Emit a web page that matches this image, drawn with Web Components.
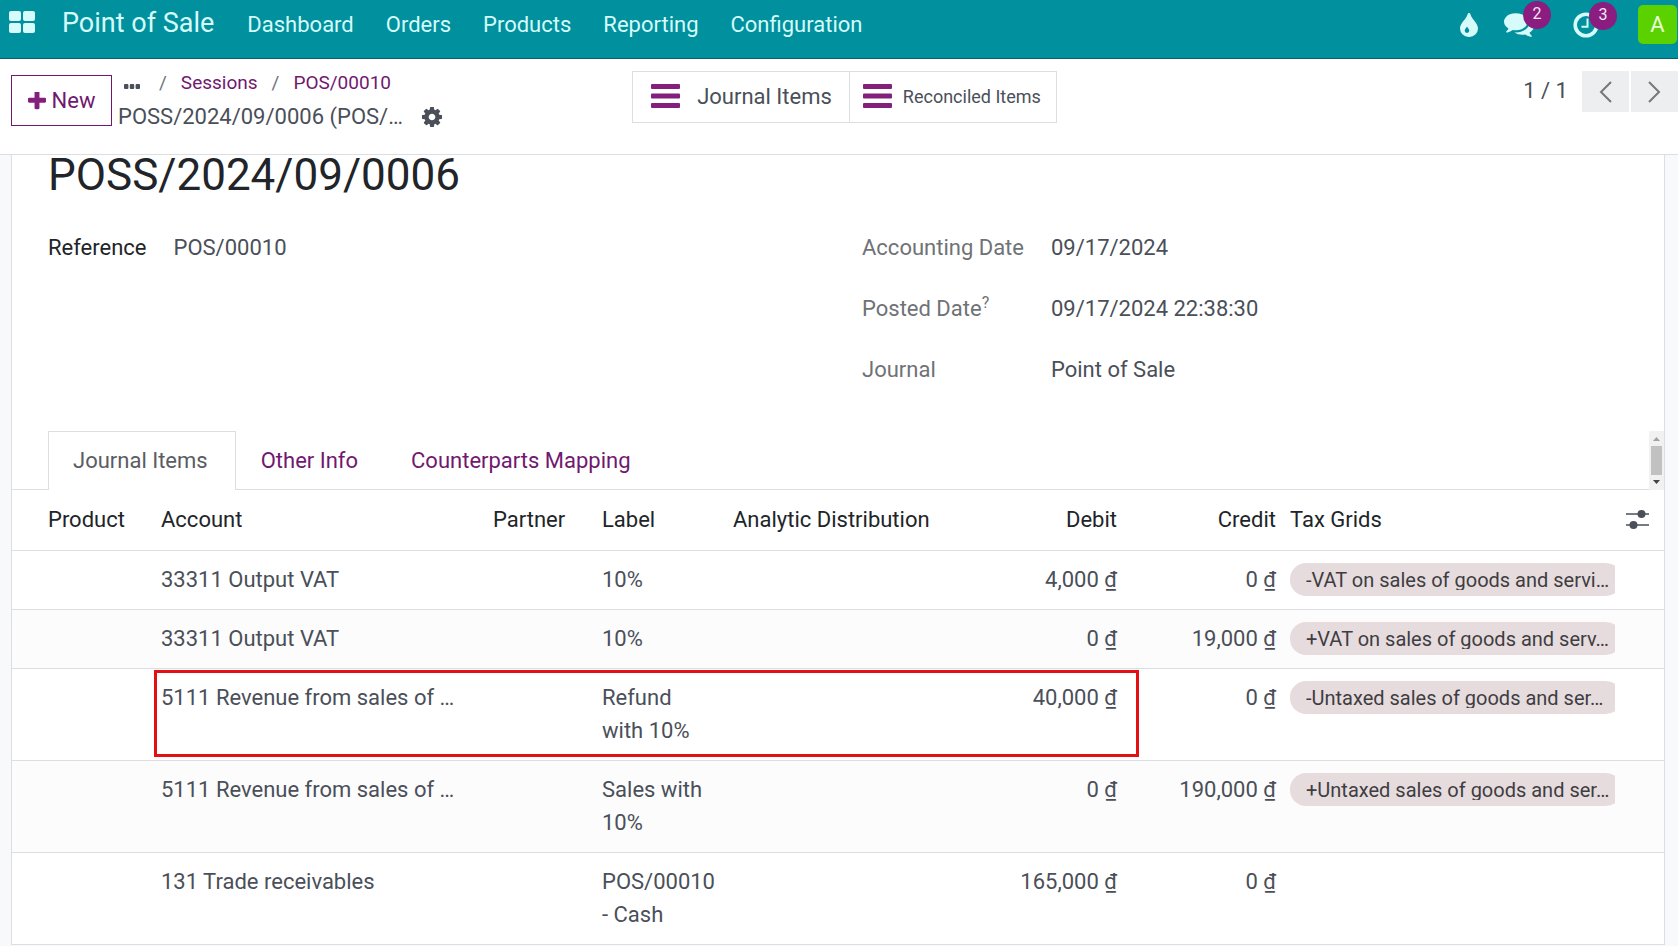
<!DOCTYPE html>
<html lang="en">
<head>
<meta charset="utf-8">
<title>Point of Sale - POSS/2024/09/0006</title>
<style>
  :root {
    --accent: #71186f;
    --accent-strong: #82207c;
    --teal: #00909e;
    --text: #4a4f59;
    --heading: #212529;
    --muted: #6f7276;
    --line: #dcdee3;
    --side: #f8f9fb;
  }
  html { height: 100%; }
  body {
    margin: 0;
    min-height: 100%;
    overflow: hidden;
    background: var(--side);
    color: var(--text);
    font: 22px/33px Roboto, "Noto Sans", sans-serif;
  }
</style>
</head>
<body>
<pos-app></pos-app>
<script>
const define = (name, html, setup) => {
  const template = document.createElement('template');
  template.innerHTML = html;
  customElements.define(name, class extends HTMLElement {
    connectedCallback() {
      if (this.shadowRoot) return;
      const root = this.attachShadow({ mode: 'open' });
      root.append(template.content.cloneNode(true));
      if (setup) setup(this, root);
    }
  });
};

const ICONS = {
  apps: ['0 0 26 22', '<rect width="12" height="10" rx="2"/><rect x="14" width="12" height="10" rx="2"/><rect y="12" width="12" height="10" rx="2"/><rect x="14" y="12" width="12" height="10" rx="2"/>'],
  drop: ['0 0 18 24', '<path fill-rule="evenodd" d="M9 0c.7 0 1.200.5 1.400 1.200C12 6.500 18 10 18 15.500A8.800 8.500 0 0 1 9 24a8.800 8.500 0 0 1-9-8.500C0 10 6 6.500 7.600 1.200 7.800.5 8.300 0 9 0zM7 13.500c-.6 1.700-2.300 2.400-2.300 4.100a2.300 2.300 0 0 0 4.600 0c0-1.700-1.700-2.400-2.300-4.100z"/>'],
  comments: ['0 256 1792 1408', '<path d="M1408 768q0 139-94 257t-256.500 186.500-353.500 68.500q-86 0-176-16-124 88-278 128-36 9-86 16h-3q-11 0-20.500-8t-11.500-21q-1-3-1-6.500t.5-6.500 2-6l2.500-5 3.500-5.500 4-5 4.500-5 4-4.500q5-6 23-25t26-29.500 22.500-29 25-38.500 20.500-44q-124-72-195-177t-71-224q0-139 94-257t256.500-186.500 353.500-68.500 353.500 68.500 256.500 186.500 94 257zm384 256q0 120-71 224.500t-195 176.500q10 24 20.500 44t25 38.500 22.500 29 26 29.500 23 25q1 1 4 4.500t4.500 5 4 5 3.500 5.500l2.500 5 2 6 .5 6.500-1 6.500q-3 14-13 22t-22 7q-50-7-86-16-154-40-278-128-90 16-176 16-271 0-472-132 58 4 88 4 161 0 309-45t264-129q125-92 192-212t67-254q0-77-23-152 129 71 204 178t75 230z"/>'],
  clock: ['0 0 26 26', '<circle cx="13" cy="13" r="10.800" fill="none" stroke="currentColor" stroke-width="3.600"/><path d="M14.500 6.500v8.300H8.500" fill="none" stroke="currentColor" stroke-width="2"/>'],
  plus: ['192 192 1408 1408', '<path d="M1600 736v192q0 40-28 68t-68 28h-416v416q0 40-28 68t-68 28h-192q-40 0-68-28t-28-68v-416h-416q-40 0-68-28t-28-68v-192q0-40 28-68t68-28h416v-416q0-40 28-68t68-28h192q40 0 68 28t28 68v416h416q40 0 68 28t28 68z"/>'],
  dots: ['0 0 16 5', '<rect width="4.400" height="5" rx="1"/><rect x="5.800" width="4.400" height="5" rx="1"/><rect x="11.600" width="4.400" height="5" rx="1"/>'],
  cog: ['128 128 1536 1536', '<path d="M1152 896q0-106-75-181t-181-75-181 75-75 181 75 181 181 75 181-75 75-181zm512-109v222q0 12-8 23t-20 13l-185 28q-19 54-39 91 35 50 107 138 10 12 10 25t-9 23q-27 37-99 108t-94 71q-12 0-26-9l-138-108q-44 23-91 38-16 136-29 186-7 28-36 28h-222q-14 0-24.500-8.500t-11.500-21.500l-28-184q-49-16-90-37l-141 107q-10 9-25 9-14 0-25-11-126-114-165-168-7-10-7-23 0-12 8-23 15-21 51-66.500t54-70.500q-27-50-41-99l-183-27q-13-2-21-12.500t-8-23.500v-222q0-12 8-23t19-13l186-28q14-46 39-92-40-57-107-138-10-12-10-24 0-10 9-23 26-36 98.500-107.500t94.500-71.500q13 0 26 10l138 107q44-23 91-38 16-136 29-186 7-28 36-28h222q14 0 24.500 8.500t11.500 21.500l28 184q49 16 90 37l142-107q9-9 24-9 13 0 25 10 129 119 165 170 7 8 7 22 0 12-8 23-15 21-51 66.500t-54 70.500q26 50 41 98l183 28q13 2 21 12.500t8 23.500z"/>'],
  bars: ['0 0 29 24', '<rect width="29" height="5" rx="1"/><rect y="9.500" width="29" height="5" rx="1"/><rect y="19" width="29" height="5" rx="1"/>'],
  prev: ['0 0 13 22', '<path d="M12 1 2 11l10 10" fill="none" stroke="currentColor" stroke-width="2"/>'],
  next: ['0 0 13 22', '<path d="M1 1l10 10L1 21" fill="none" stroke="currentColor" stroke-width="2"/>'],
  sliders: ['0 0 23 20', '<path d="M0 5h23M0 16h23" stroke="currentColor" stroke-width="1.600"/><circle cx="15.500" cy="5" r="4"/><circle cx="7.500" cy="16" r="4"/>']
};

define('ui-icon', `
  <style>
    :host { display: inline-block; flex: none; }
    svg { display: block; width: 100%; height: 100%; fill: currentColor; }
  </style>
  <svg aria-hidden="true"></svg>`, (host, root) => {
    const [box, body] = ICONS[host.getAttribute('name')];
    const svg = root.querySelector('svg');
    svg.setAttribute('viewBox', box);
    svg.innerHTML = body;
  });

define('count-badge', `
  <style>
    :host {
      position: absolute; bottom: 8px; left: var(--badge-left, 19px);
      width: 28px; height: 28px; border-radius: 14px;
      background: #8b1c80; color: #f4e6f3;
      font-size: 16px; line-height: 26px; text-align: center;
    }
  </style>
  <slot></slot>`);

define('main-navbar', `
  <style>
    :host {
      display: flex; align-items: center; box-sizing: border-box;
      height: 59px; padding: 0 1px 9px 9px;
      background: var(--teal); border-bottom: 1px solid #0c5f66;
      color: #d5fbfb;
    }
    a { color: inherit; text-decoration: none; white-space: nowrap; }
    button { display: block; position: relative; padding: 0; border: 0; background: none; color: inherit; font: inherit; }
    .apps ui-icon { width: 26px; height: 22px; display: block; margin-bottom: 6px; }
    .brand { margin: 0 33px 2px 27px; font-size: 27px; }
    nav { display: flex; gap: 32px; }
    .tray { display: flex; align-items: center; margin-left: auto; }
    .tray ui-icon { display: block; }
    .drop { width: 18px; height: 24px; }
    .comments { width: 30px; height: 24px; }
    .clock { width: 26px; height: 26px; }
    .tray button + button { margin-left: 26px; }
    .tray button.act { margin-left: 39px; --badge-left: 16px; }
    .tray button.user {
      width: 39px; height: 39px; margin-left: 39px; border-radius: 5px;
      background: #5bd200; color: #eaffd8; text-align: center;
    }
  </style>
  <button class="apps" aria-label="Apps"><ui-icon name="apps"></ui-icon></button>
  <a class="brand" href="#">Point of Sale</a>
  <nav>
    <a href="#">Dashboard</a><a href="#">Orders</a><a href="#">Products</a><a href="#">Reporting</a><a href="#">Configuration</a>
  </nav>
  <div class="tray">
    <button aria-label="Theme"><ui-icon class="drop" name="drop"></ui-icon></button>
    <button aria-label="Messages"><ui-icon class="comments" name="comments"></ui-icon><count-badge>2</count-badge></button>
    <button class="act" aria-label="Activities"><ui-icon class="clock" name="clock"></ui-icon><count-badge>3</count-badge></button>
    <button class="user" aria-label="Account">A</button>
  </div>`);

define('stat-button', `
  <style>
    :host { display: block; }
    :host(:not(:first-child)) { margin-left: -1px; }
    button {
      display: flex; align-items: center; gap: 17px; box-sizing: border-box;
      height: 52px; padding: 0 17px 2px 18px;
      border: 1px solid var(--line); background: #fff;
      color: var(--text); font: inherit; white-space: nowrap;
    }
    :host([compact]) button { gap: 11px; padding: 0 15px 2px 13px; font-size: 18px; }
    ui-icon { width: 29px; height: 24px; color: var(--accent-strong); }
  </style>
  <button><ui-icon name="bars"></ui-icon><span><slot></slot></span></button>`);

define('control-panel', `
  <style>
    :host {
      display: grid; grid-template-columns: 1fr auto 1fr; align-items: start;
      box-sizing: border-box; height: 96px; padding: 12px 0 0 11px;
      background: #fff; border-bottom: 1px solid var(--line);
    }
    button { border: 0; padding: 0; background: none; color: var(--text); font: inherit; }
    .left { display: flex; gap: 6px; min-width: 0; white-space: nowrap; }
    .new {
      display: flex; align-items: center; justify-content: center; gap: 6px; box-sizing: border-box;
      width: 101px; height: 51px; margin-top: 4px;
      border: 1px solid var(--accent); color: var(--accent);
    }
    .new ui-icon { width: 18px; height: 18px; color: var(--accent-strong); }
    ol { display: flex; margin: -5px 0 0; padding: 0; list-style: none; font-size: 19px; }
    li + li::before { content: "/"; padding: 0 14px; color: #6c757d; }
    li a { color: var(--accent); text-decoration: none; }
    .more { padding-left: 6px; }
    .more ui-icon { width: 16px; height: 5px; display: block; margin-top: 17px; }
    li + li:nth-child(2)::before { padding-left: 19px; }
    .current { display: flex; align-items: center; gap: 19px; margin-top: 1px; }
    .current ui-icon { display: block; width: 20px; height: 20px; }
    .stats { display: flex; }
    .pager { display: flex; justify-content: flex-end; align-items: flex-start; gap: 2px; }
    .pager span { margin: 3px 12px 0 0; }
    .pager button { display: grid; place-items: center; width: 47px; height: 41px; background: #edeef0; color: #777; }
    .pager ui-icon { width: 13px; height: 22px; }
  </style>
  <div class="left">
    <button class="new"><ui-icon name="plus"></ui-icon>New</button>
    <div>
      <ol>
        <li class="more"><button aria-label="More"><ui-icon name="dots"></ui-icon></button></li>
        <li><a href="#">Sessions</a></li>
        <li><a href="#">POS/00010</a></li>
      </ol>
      <div class="current"><span>POSS/2024/09/0006 (POS/…</span><button aria-label="Actions"><ui-icon name="cog"></ui-icon></button></div>
    </div>
  </div>
  <div class="stats">
    <stat-button>Journal Items</stat-button>
    <stat-button compact>Reconciled Items</stat-button>
  </div>
  <div class="pager">
    <span>1 / 1</span>
    <button aria-label="Previous"><ui-icon name="prev"></ui-icon></button>
    <button aria-label="Next"><ui-icon name="next"></ui-icon></button>
  </div>`);

define('field-group', `
  <style>
    :host { display: block; }
    dl { display: grid; grid-template-columns: auto 1fr; gap: 28px 27px; margin: 0; }
    ::slotted(dt) { color: var(--label-color, var(--muted)); }
    ::slotted(dd) { margin: 0; }
  </style>
  <dl><slot></slot></dl>`);

define('tab-bar', `
  <style>
    :host { display: flex; padding-left: 36px; box-shadow: inset 0 -1px var(--line); }
    button {
      box-sizing: border-box; height: 59px; padding: 0 27px 2px 24px;
      border: 1px solid transparent; border-bottom: 0; background: none;
      color: var(--accent); font: inherit;
    }
    button[aria-selected="true"] { border-color: var(--line); background: #fff; color: #5a5d63; }
    svg { width: 15px; height: 59px; margin-left: auto; }
  </style>
  <button role="tab" aria-selected="true">Journal Items</button>
  <button role="tab">Other Info</button>
  <button role="tab">Counterparts Mapping</button>
  <svg viewBox="0 0 15 59" aria-hidden="true">
    <rect width="15" height="59" fill="#f1f1f1"/>
    <rect x="2" y="15" width="11" height="29" fill="#c1c1c1"/>
    <path d="M4 10 7.500 6 11 10z" fill="#a0a0a0"/>
    <path d="M4 49 7.500 53 11 49z" fill="#444"/>
  </svg>`);

define('tax-tag', `
  <style>
    :host { display: block; overflow: hidden; }
    div {
      display: flex; align-items: center; box-sizing: border-box;
      width: calc(100% + 7px); height: 33px; padding: 0 8px 0 16px;
      border-radius: 16px; background: #e6dcde; color: #3f3d42;
      font-size: 20px; line-height: 20px;
    }
    span { overflow: hidden; white-space: nowrap; }
  </style>
  <div><span><slot></slot></span></div>`);

const ROWS = [
  ['33311 Output VAT', '10%', '4,000 ₫', '0 ₫', '-VAT on sales of goods and servi…'],
  ['33311 Output VAT', '10%', '0 ₫', '19,000 ₫', '+VAT on sales of goods and serv…'],
  ['5111 Revenue from sales of …', 'Refund with 10%', '40,000 ₫', '0 ₫', '-Untaxed sales of goods and ser…', true],
  ['5111 Revenue from sales of …', 'Sales with 10%', '0 ₫', '190,000 ₫', '+Untaxed sales of goods and ser…'],
  ['131 Trade receivables', 'POS/00010 - Cash', '165,000 ₫', '0 ₫', '']
];

define('journal-table', `
  <style>
    :host { display: block; }
    table { width: 100%; table-layout: fixed; border-collapse: separate; border-spacing: 0; }
    th, td { box-sizing: border-box; padding: 12px 7px 13px; border-bottom: 1px solid var(--line); text-align: left; vertical-align: top; }
    th { padding: 13px 7px 14px; color: var(--heading); font-weight: 400; white-space: nowrap; }
    th:first-child { padding-left: 36px; }
    td:nth-child(4) { padding-right: 9px; }
    .num { text-align: right; white-space: nowrap; }
    tbody tr:nth-child(even) { background: #fcfcfc; }
    tr.marked { position: relative; }
    .mark {
      position: absolute; inset: 1px 525px 4px 142px;
      border: 3px solid #e30f12; pointer-events: none;
    }
    th button { display: block; padding: 0; border: 0; background: none; color: var(--text); }
    th ui-icon { display: block; width: 23px; height: 20px; margin: 6px 0 0 -3px; }
    .product { width: 142px; } .partner { width: 109px; } .label { width: 131px; }
    .analytic { width: 215px; } .debit { width: 183px; } .credit { width: 159px; }
    .tax { width: 339px; } .options { width: 42px; }
  </style>
  <table>
    <colgroup>
      <col class="product"><col><col class="partner"><col class="label"><col class="analytic">
      <col class="debit"><col class="credit"><col class="tax"><col class="options">
    </colgroup>
    <thead><tr>
      <th>Product</th><th>Account</th><th>Partner</th><th>Label</th><th>Analytic Distribution</th>
      <th class="num">Debit</th><th class="num">Credit</th><th>Tax Grids</th>
      <th><button aria-label="Columns"><ui-icon name="sliders"></ui-icon></button></th>
    </tr></thead>
    <tbody></tbody>
  </table>`, (host, root) => {
    root.querySelector('tbody').innerHTML = ROWS.map(([account, label, debit, credit, tax, marked]) => `
      <tr${marked ? ' class="marked"' : ''}>
        <td>${marked ? '<div class="mark"></div>' : ''}</td><td>${account}</td><td></td><td>${label}</td><td></td>
        <td class="num">${debit}</td><td class="num">${credit}</td>
        <td>${tax ? `<tax-tag>${tax}</tax-tag>` : ''}</td><td></td>
      </tr>`).join('');
  });

define('form-sheet', `
  <style>
    :host { display: block; margin: 0 13px 0 11px; background: #fff; border: 1px solid var(--line); border-width: 0 1px; }
    h1 { margin: 0 0 36px; padding-left: 36px; color: var(--heading); font-size: 44px; font-weight: 400; line-height: 40px; }
    .fields { display: grid; grid-template-columns: 1fr 1fr; gap: 48px; padding: 0 36px; margin-bottom: 45px; }
    .primary { --label-color: var(--heading); }
    sup { font-size: 16px; line-height: 0; }
  </style>
  <h1>POSS/2024/09/0006</h1>
  <div class="fields">
    <field-group class="primary"><dt>Reference</dt><dd>POS/00010</dd></field-group>
    <field-group>
      <dt>Accounting Date</dt><dd>09/17/2024</dd>
      <dt>Posted Date<sup>?</sup></dt><dd>09/17/2024 22:38:30</dd>
      <dt>Journal</dt><dd>Point of Sale</dd>
    </field-group>
  </div>
  <tab-bar></tab-bar>
  <journal-table></journal-table>`);

define('pos-app', `
  <style>:host { display: block; }</style>
  <main-navbar></main-navbar>
  <control-panel></control-panel>
  <form-sheet></form-sheet>`);
</script>
</body>
</html>
